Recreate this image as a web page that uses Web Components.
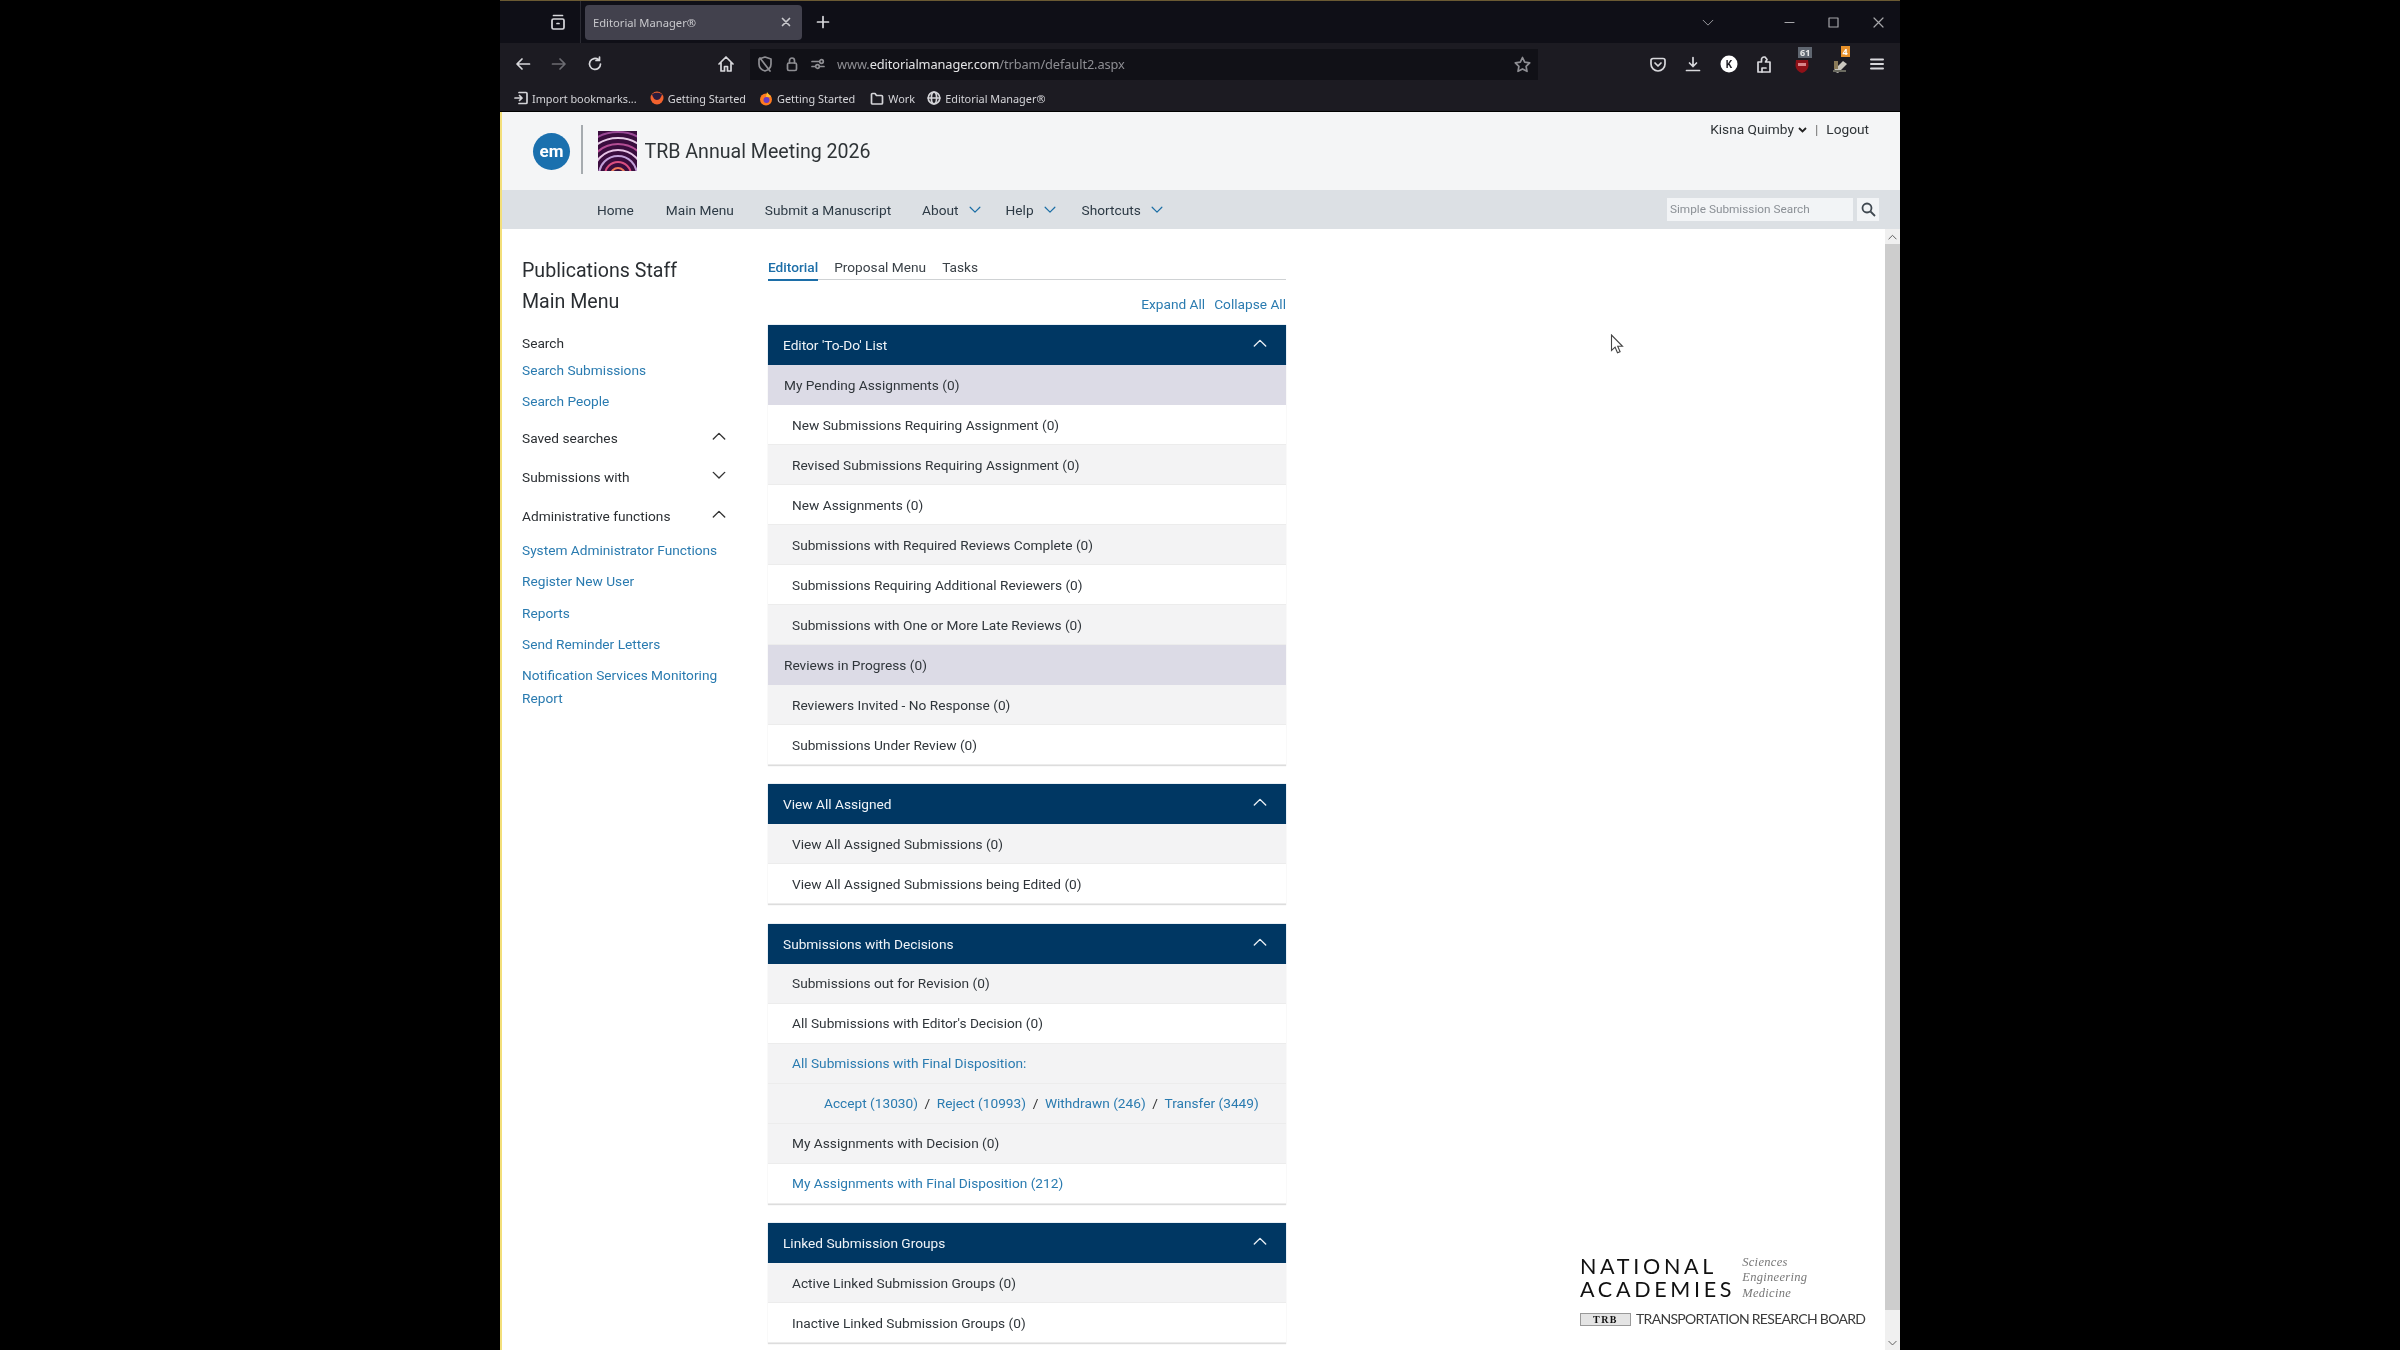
<!DOCTYPE html>
<html lang="en"><head><meta charset="utf-8"><title>Editorial Manager</title>
<style>
html,body{margin:0;height:100%;background:#000;overflow:hidden}
body{font-family:Roboto,"Liberation Sans",sans-serif;display:flex;justify-content:center}
</style></head><body>
<em-window>
  <browser-chrome></browser-chrome>
  <site-header></site-header>
  <site-nav></site-nav>
  <page-body>
    <side-menu></side-menu>
    <div slot="main">
      <main-tabs></main-tabs>
      <em-panel heading="Editor 'To-Do' List">
        <em-row kind="group">My Pending Assignments (0)</em-row>
        <em-row>New Submissions Requiring Assignment (0)</em-row>
        <em-row>Revised Submissions Requiring Assignment (0)</em-row>
        <em-row>New Assignments (0)</em-row>
        <em-row>Submissions with Required Reviews Complete (0)</em-row>
        <em-row>Submissions Requiring Additional Reviewers (0)</em-row>
        <em-row>Submissions with One or More Late Reviews (0)</em-row>
        <em-row kind="group">Reviews in Progress (0)</em-row>
        <em-row>Reviewers Invited - No Response (0)</em-row>
        <em-row>Submissions Under Review (0)</em-row>
      </em-panel>
      <em-panel heading="View All Assigned">
        <em-row>View All Assigned Submissions (0)</em-row>
        <em-row>View All Assigned Submissions being Edited (0)</em-row>
      </em-panel>
      <em-panel heading="Submissions with Decisions">
        <em-row>Submissions out for Revision (0)</em-row>
        <em-row>All Submissions with Editor's Decision (0)</em-row>
        <em-row kind="link">All Submissions with Final Disposition:</em-row>
        <em-row kind="sub"><a>Accept (13030)</a><i>/</i><a>Reject (10993)</a><i>/</i><a>Withdrawn (246)</a><i>/</i><a>Transfer (3449)</a></em-row>
        <em-row>My Assignments with Decision (0)</em-row>
        <em-row kind="link">My Assignments with Final Disposition (212)</em-row>
      </em-panel>
      <em-panel heading="Linked Submission Groups">
        <em-row>Active Linked Submission Groups (0)</em-row>
        <em-row>Inactive Linked Submission Groups (0)</em-row>
      </em-panel>
    </div>
    <na-logo slot="aside"></na-logo>
  </page-body>
</em-window>
<script>
const S='fill="none" stroke="currentColor" stroke-width="1.7" stroke-linecap="round" stroke-linejoin="round"';
const ic=(w,h,inner,extra='')=>`<svg width="${w}" height="${h}" viewBox="0 0 ${w} ${h}" ${S} ${extra}>${inner}</svg>`;
const chev=(up,c='currentColor',w=16,h=9)=>`<svg width="${w}" height="${h}" viewBox="0 0 16 9" fill="none" stroke="${c}" stroke-width="1.6" stroke-linecap="round" stroke-linejoin="round"><path d="${up?'M1.5 8 8 1.5 14.5 8':'M1.5 1.5 8 8 14.5 1.5'}"/></svg>`;
function def(name,html,init){
  customElements.define(name,class extends HTMLElement{
    constructor(){super();this.attachShadow({mode:'open'}).innerHTML=typeof html==='function'?html(this):html;}
    connectedCallback(){if(init)init(this);}
  });
}
def('em-window',`<style>
:host{display:flex;flex-direction:column;width:1400px;height:1350px;background:#fff;position:relative;overflow:hidden;filter:blur(.45px)}
.edge{position:absolute;left:0;top:112px;bottom:0;width:1.5px;background:#f3df7a}
.cursor{position:absolute;left:1110px;top:334px}
</style><slot></slot><div class="edge"></div>
<svg class="cursor" width="14" height="21" viewBox="0 0 14 21"><path d="M1.5 1v15.5l3.6-3.3 2.4 5.6 2.6-1.1-2.4-5.4h4.8z" fill="#fff" stroke="#444" stroke-width="1.1"/></svg>`);

def('browser-chrome',`<style>
:host{display:block;background:#1c1b22;color:#d8d8dc;font-family:"Noto Sans",Roboto,sans-serif;border-bottom:1px solid #000}
svg{display:block;flex:none}
.strip{height:43px;display:flex;align-items:center;background:#0f0f17;border-top:1.5px solid #6b5a33;box-sizing:border-box}
.side{width:81px;height:100%;display:flex;align-items:center;justify-content:center;padding-left:36px;box-sizing:border-box;border-right:1px solid #2b2b33;flex:none}
.tab{width:217px;height:35px;margin-left:4px;border-radius:4px;background:#42414d;display:flex;align-items:center;padding:0 11px 0 8px;box-sizing:border-box;font-size:11.2px;color:#c8c8cc;justify-content:space-between;flex:none}
.plus{margin-left:14px}
.caps{margin-left:auto;display:flex;align-items:center;gap:0;color:#a6a6aa;padding-right:16px}
.caps svg{stroke-width:1.2}
.tools{height:42px;display:flex;align-items:center}
.nav{display:flex;align-items:center;gap:20px;padding-left:15px;width:254px;box-sizing:border-box;flex:none}
.url{width:788px;height:31px;margin-left:-4px;background:#111117;display:flex;align-items:center;flex:none;padding-left:7px;box-sizing:border-box;font-size:12.8px;color:#8e8e93;white-space:nowrap;gap:13px}
.url b{font-weight:400;color:#e4e4e6}
.url .t{margin-left:-1px;flex:1;letter-spacing:-.1px}
.ext{display:flex;align-items:center;margin-left:102px;gap:0}
.ext>*{width:35.5px;display:flex;justify-content:center;position:relative}
.badge{position:absolute;top:-8px;font-size:9px;font-weight:700;line-height:11px;padding:0 2px;color:#e8e8e8;background:#5f6670}
.marks{height:26px;display:flex;align-items:center;font-size:10.9px;color:#d4d4d8;padding-left:14px;white-space:nowrap}
.marks span{display:flex;align-items:center;gap:4px;margin-right:10px}
</style>
<div class="strip">
  <div class="side">${ic(18,18,'<rect x="3" y="6" width="12" height="10" rx="1.5"/><path d="M4.5 2.5h9M8 10.5h2"/>')}</div>
  <div class="tab"><span>Editorial Manager®</span>${ic(10,10,'<path d="M1.5 1.5l7 7M8.5 1.5l-7 7"/>')}</div>
  <div class="plus">${ic(14,14,'<path d="M7 1.5v11M1.5 7h11"/>')}</div>
  <div class="caps">
    ${chev(false,'currentColor',12,7)}
    <div style="width:75px;display:flex;justify-content:center;margin-left:38px">${ic(11,3,'<path d="M1 1.5h9"/>')}</div>
    <div style="width:12px;margin-right:33px;margin-left:1.5px">${ic(11,11,'<rect x="1" y="1" width="9" height="9"/>')}</div>
    ${ic(11,11,'<path d="M1 1l9 9M10 1l-9 9"/>')}
  </div>
</div>
<div class="tools">
  <div class="nav">
    ${ic(16,14,'<path d="M14.5 7h-12M7 2 2 7l5 5"/>')}
    ${ic(16,14,'<path d="M1.5 7h12M9 2l5 5-5 5"/>','style="color:#6c6c72"')}
    ${ic(16,16,'<path d="M13.5 8A5.5 5.5 0 1 1 11.5 3.7M12.5 1v3.5H9"/>')}
    <div style="margin-left:94px">${ic(18,18,'<path d="M2 9l7-7 7 7M4 7.500V16h3.500v-4.500h3V16H14V7.500"/>')}</div>
  </div>
  <div class="url">
    ${ic(16,18,'<path d="M8 2l6 2v5c0 3.500-3 6-6 7-3-1-6-3.500-6-7V4zM3 3l10 13"/>')}
    ${ic(12,16,'<rect x="1.500" y="7" width="9" height="7.500" rx="1.500"/><path d="M3.500 7V4.500a2.500 2.500 0 0 1 5 0V7"/>')}
    ${ic(14,12,'<path d="M1 3.500h7M1 8.500h3"/><circle cx="10.500" cy="3.500" r="1.800"/><circle cx="6.500" cy="8.500" r="1.800"/><path d="M9 8.500h4"/>')}
    <span class="t">www.<b>editorialmanager.com</b>/trbam/default2.aspx</span>
    <div style="margin-right:7px">${ic(17,17,'<path d="M8.500 1.500l2.200 4.600 5 .7-3.600 3.500.9 5-4.500-2.400L4 15.300l.9-5L1.300 6.800l5-.7z"/>')}</div>
  </div>
  <div class="ext">
    <div>${ic(16,15,'<path d="M3 1.500h10a2 2 0 0 1 2 2V7A7 7 0 0 1 1 7V3.500a2 2 0 0 1 2-2z"/><path d="M5 6l3 3 3-3"/>')}</div>
    <div>${ic(16,16,'<path d="M8 1.500v9M4.500 7 8 10.500 11.500 7M1.500 14.500h13"/>')}</div>
    <div><svg width="18" height="18" viewBox="0 0 18 18"><circle cx="9" cy="9" r="8.500" fill="#fff"/><text x="9" y="12.500" font-size="10" font-weight="700" text-anchor="middle" fill="#1c1b22" font-family="Roboto">K</text></svg></div>
    <div>${ic(16,20,'<path d="M2 18V8h3.500V5.500a2.500 2.500 0 0 1 2.500-2.500h1l2 2.500L9.500 8H14v10z"/><path d="M6 18v-4h4"/>')}</div>
    <div style="left:2px"><svg width="16" height="16" viewBox="0 0 16 16" style="margin-top:3px"><path d="M2 2h12l.5 5c0 4-3 7-6.500 8C4.500 14 1.500 11 1.500 7z" fill="#8f1118"/><rect x="4" y="5" width="8" height="3" fill="#d9868a"/></svg><span class="badge" style="left:14px">61</span></div>
    <div style="left:5px"><svg width="18" height="18" viewBox="0 0 18 18" style="margin-top:2px"><path d="M2 15 12 5l4 3-9 9z" fill="#c9c6be"/><path d="M3 5h4v8H3z" fill="#8a7a58"/><path d="M2 14h13v2H2z" fill="#6a6a60"/></svg><span class="badge" style="left:18px;background:#e8912a;color:#fff">4</span></div>
    <div style="left:6px">${ic(14,12,'<path d="M1 1.500h12M1 6h12M1 10.500h12"/>','style="stroke-width:2"')}</div>
  </div>
</div>
<div class="marks">
  <span>${ic(14,14,'<path d="M5 1.500h7a1 1 0 0 1 1 1v9a1 1 0 0 1-1 1H5M1 7h7M5.500 4.500 8 7l-2.500 2.500"/>')}Import bookmarks...</span>
  <span style="margin-left:3px"><svg width="14" height="14" viewBox="0 0 14 14"><circle cx="7" cy="7" r="6.500" fill="#f2622e"/><path d="M2 3.500C3.500 1 10.500 1 12 3.500 11 6 10 9 7 9 4 9 3 6 2 3.500z" fill="#2a1c3e"/></svg>Getting Started</span>
  <span style="margin-left:3px"><svg width="14" height="15" viewBox="0 0 14 15"><circle cx="7" cy="8.500" r="6" fill="#ff7a1f"/><circle cx="7.500" cy="9" r="3" fill="#6a3bc4"/><path d="M8 1c1 2 3 3 4 5L7 6z" fill="#ffbd2e"/></svg>Getting Started</span>
  <span style="margin-left:5px">${ic(14,13,'<path d="M1.500 11V2.500a1 1 0 0 1 1-1H5l1.500 2h5a1 1 0 0 1 1 1V11a1 1 0 0 1-1 1h-9a1 1 0 0 1-1-1z"/>')}Work</span>
  <span style="margin-left:2px">${ic(14,14,'<circle cx="7" cy="7" r="5.800"/><ellipse cx="7" cy="7" rx="2.600" ry="5.800"/><path d="M1.200 7h11.600"/>')}Editorial Manager®</span>
</div>`);

def('site-header',`<style>
:host{display:flex;height:78px;background:#f4f5f6;flex:none;color:#2f3437;box-sizing:border-box;padding-left:33px;position:relative}
.em{width:37px;height:37px;border-radius:50%;background:#1a70ae;color:#fff;font:700 17px/37px Roboto,sans-serif;text-align:center;margin-top:21px;flex:none}
.div{width:1.5px;height:49px;background:#a6abaf;margin:13px 15px 0 11px;flex:none}
svg{margin-top:19px;flex:none}
h1{font:400 19.6px/28px Roboto,sans-serif;margin:26px 0 0 8px;white-space:nowrap}
.user{margin-left:auto;font-size:13.7px;line-height:20px;padding:6.5px 31px 0 0;display:flex;align-items:flex-start;white-space:nowrap}
.user svg{margin:8px 0 0 4px}
.sep{margin:0 8px 0 8px;color:#777}
</style>
<div class="em">em</div><div class="div"></div>
<svg width="39" height="40" viewBox="0 0 39 40"><rect width="39" height="40" fill="#3a0d3e"/><g fill="none" stroke-width="2">
<circle cx="20" cy="44" r="7" stroke="#f07a5a"/><circle cx="20" cy="44" r="13" stroke="#d94f80"/><circle cx="20" cy="44" r="19" stroke="#c2a0d8"/><circle cx="20" cy="44" r="25" stroke="#e7c4e6"/><circle cx="20" cy="44" r="31" stroke="#b34d94"/><circle cx="20" cy="44" r="37" stroke="#e8cce8"/><circle cx="20" cy="44" r="43" stroke="#9a4a96"/></g></svg>
<h1>TRB Annual Meeting 2026</h1>
<div class="user"><span>Kisna Quimby</span><svg width="9" height="6" viewBox="0 0 9 6" fill="none" stroke="#222" stroke-width="1.800"><path d="M1 1l3.500 3.500L8 1"/></svg><span class="sep">|</span><span>Logout</span></div>`);

def('site-nav',`<style>
:host{display:flex;align-items:center;height:39px;background:#dce0e4;flex:none;padding-left:97px;box-sizing:border-box;font-size:13.7px;color:#2d3a45;white-space:nowrap;gap:31px}
span{display:flex;align-items:center;gap:10px}
span.f{margin-right:1px}
span.a{margin-right:-6px}
span.d{margin-right:-5px}
svg{display:block}
.search{margin-left:auto;display:flex;gap:4px;margin-right:21px}
.in{width:186px;height:23px;background:#f2f4f6;color:#8b9096;font-size:11.8px;line-height:23px;padding-left:3px;box-sizing:border-box}
.btn{width:22px;height:23px;background:#f2f4f6;display:flex;align-items:center;justify-content:center}
</style>
<span class="f">Home</span><span>Main Menu</span><span>Submit a Manuscript</span>
<span class="a">About ${chev(false,'#1b6ea5',12,7)}</span><span class="d">Help ${chev(false,'#1b6ea5',12,7)}</span><span class="d">Shortcuts ${chev(false,'#1b6ea5',12,7)}</span>
<div class="search"><div class="in">Simple Submission Search</div><div class="btn"><svg width="15" height="15" viewBox="0 0 15 15" fill="none" stroke="#3f4850" stroke-width="1.800"><circle cx="6" cy="6" r="4.500"/><path d="M9.500 9.500l4.500 4.500"/></svg></div></div>`);

def('page-body',`<style>
:host{display:flex;flex:1;min-height:0;overflow:hidden;background:#fff}
.main{width:518px;flex:none}
.aside{flex:1;display:flex;flex-direction:column;justify-content:flex-end;align-items:flex-end;padding:0 23px 21px 0;box-sizing:border-box;height:1121px}
.bar{width:15px;flex:none;background:#f0f0f0;display:flex;flex-direction:column;height:1121px;color:#505050;box-sizing:border-box}
.bar .a{height:15px;display:flex;align-items:center;justify-content:center}
.thumb{height:1066px;background:#cdcdcd}
.sp{flex:1}
</style><slot></slot><div class="main"><slot name="main"></slot></div><div class="aside"><slot name="aside"></slot></div>
<div class="bar"><div class="a">${chev(true,'currentColor',9,6)}</div><div class="thumb"></div><div class="sp"></div><div class="a">${chev(false,'currentColor',9,6)}</div></div>`);

def('side-menu',`<style>
:host{display:block;width:268px;flex:none;padding:26px 0 0 22px;box-sizing:border-box;color:#2b2f33;font-size:13.7px}
h2{font:400 19.6px/31px Roboto,sans-serif;margin:0 0 15px;color:#2a2e32}
div{line-height:22px;white-space:nowrap}
a{display:block;color:#2a7bb0;line-height:23px;margin-bottom:8.4px;width:200px}
.h{display:flex;justify-content:space-between;align-items:center;width:204px;height:23px}
.h svg{margin-top:-4px}
.m39{margin-top:16px}
a.wrap{white-space:normal}
</style>
<h2>Publications Staff<br>Main Menu</h2>
<div style="margin-bottom:5px">Search</div>
<a>Search Submissions</a><a>Search People</a>
<div class="h" style="margin-top:13px"><span>Saved searches</span>${chev(true,'#333',14,8)}</div>
<div class="h m39"><span>Submissions with</span>${chev(false,'#333',14,8)}</div>
<div class="h m39" style="margin-bottom:11.5px"><span>Administrative functions</span>${chev(true,'#333',14,8)}</div>
<a>System Administrator Functions</a><a>Register New User</a><a>Reports</a><a>Send Reminder Letters</a><a class="wrap">Notification Services Monitoring Report</a>`);

def('main-tabs',`<style>
:host{display:block;padding-top:29px;font-size:13.7px;color:#3b4248}
.t{display:flex;gap:16px;border-bottom:1.5px solid #cfd2d4;height:21px;line-height:19px}
.t b{font-weight:500;color:#1c6ea8;border-bottom:2px solid #1c6ea8;height:21px;box-sizing:content-box}
.x{display:flex;justify-content:flex-end;gap:9px;color:#2a7bb0;height:45px;line-height:49px}
.x span:first-child{margin-right:0}
</style><div class="t"><b>Editorial</b><span>Proposal Menu</span><span>Tasks</span></div><div class="x"><span>Expand All</span><span>Collapse All</span></div>`);

def('em-panel',h=>`<style>
:host{display:block;margin-bottom:19.4px;font-size:13.7px}
.hd{height:40px;background:#003763;color:#f0f4f8;display:flex;align-items:center;justify-content:space-between;padding:0 19px 0 15px;box-sizing:border-box;box-shadow:0 0 1px #7fa6c6}
.hd svg{margin-top:-4px}
.bd{box-shadow:0 1px 1px #ddd}
</style><div class="hd"><span>${h.getAttribute('heading')}</span>${chev(true,'#e8eef4',14,8)}</div><div class="bd"><slot></slot></div>`);

def('em-row',`<style>
:host{display:flex;align-items:center;height:40px;box-sizing:border-box;padding-left:24px;color:#30363b;background:#fff;border-bottom:1px solid #ececec;white-space:nowrap}
:host(:nth-child(odd)){background:#f3f3f4}
:host(:nth-child(even)){background:#fff}
:host([kind=group]){background:#dcdbe6;padding-left:16px;border-bottom-color:#dcdbe6}
:host([kind=link]){color:#2a7bb0}
:host([kind=sub]){padding-left:56px;background:#f3f3f4;color:#2a7bb0}
::slotted(i){font-style:normal;color:#333;margin:0 6.6px}
</style><slot></slot>`);

def('na-logo',`<style>
:host{display:block;width:282px;color:#1e1e1e;white-space:nowrap}
.top{display:flex;gap:7px}
.n{font:400 21.5px/23px Lato,"Liberation Sans",sans-serif;letter-spacing:3.7px;color:#111}
.s{font:italic 400 12.5px/15.5px "Liberation Serif",serif;color:#777;letter-spacing:.3px}
.b{display:flex;align-items:center;gap:5px;margin-top:8px;font:400 14px/20px Lato,"Liberation Sans",sans-serif;color:#3b3b3b;letter-spacing:-.7px}
.t{flex:none;width:49px;height:11px;border:1px solid #999;background:#e4e4e4;font:900 10px/11px "Liberation Serif",serif;text-align:center;color:#111;letter-spacing:1.5px}
</style><div class="top"><div class="n">NATIONAL<br>ACADEMIES</div><div class="s">Sciences<br>Engineering<br>Medicine</div></div>
<div class="b"><span class="t">TRB</span><span>TRANSPORTATION RESEARCH BOARD</span></div>`);
</script>
</body></html>
